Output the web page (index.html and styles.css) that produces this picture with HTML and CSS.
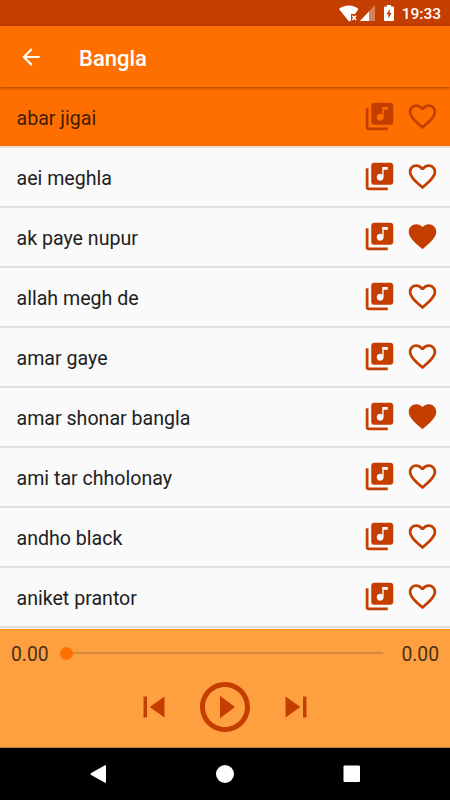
FILE: index.html
```html
<!DOCTYPE html>
<html lang="en">
<head>
    <meta charset="UTF-8">
    <meta name="viewport" content="width=device-width, initial-scale=1.0">
    <title>Bangla</title>
    <link rel="stylesheet" href="styles.css">
</head>
<body>

    <svg class="symbols">
        <symbol id="music" viewBox="0 0 24 24">
            <path d="M20 2H8c-1.1 0-2 .9-2 2v12c0 1.1.9 2 2 2h12c1.1 0 2-.9 2-2V4c0-1.1-.9-2-2-2zm-2 5h-3v5.5c0 1.38-1.12 2.5-2.5 2.5S10 13.88 10 12.5s1.12-2.5 2.5-2.5c.57 0 1.08.19 1.5.51V5h4v2zM4 6H2v14c0 1.1.9 2 2 2h14v-2H4V6z"/>
        </symbol>
        <symbol id="heart" viewBox="0 0 24 24">
            <path d="M16.5 3c-1.74 0-3.41.81-4.5 2.09C10.91 3.81 9.24 3 7.5 3 4.42 3 2 5.42 2 8.5c0 3.78 3.4 6.86 8.55 11.54L12 21.35l1.45-1.32C18.6 15.36 22 12.28 22 8.5 22 5.42 19.58 3 16.5 3zm-4.4 15.55l-.1.1-.1-.1C7.14 14.24 4 11.39 4 8.5 4 6.5 5.5 5 7.5 5c1.54 0 3.04.99 3.57 2.36h1.87C13.46 5.99 14.96 5 16.5 5c2 0 3.5 1.5 3.5 3.5 0 2.89-3.14 5.74-7.9 10.05z"/>
        </symbol>
        <symbol id="heart-full" viewBox="0 0 24 24">
            <path d="M12 21.35l-1.45-1.32C5.4 15.36 2 12.28 2 8.5 2 5.42 4.42 3 7.5 3c1.74 0 3.41.81 4.5 2.09C13.09 3.81 14.76 3 16.5 3 19.58 3 22 5.42 22 8.5c0 3.78-3.4 6.86-8.55 11.54L12 21.35z"/>
        </symbol>
    </svg>

    <div class="status-bar">
        <svg class="wifi" viewBox="0 0 20 17">
            <path d="M0 4C5-.7 14.5-.7 19.5 4L16 9H12v6.500L10 16.500z"/>
            <path class="cross" d="M13.300 10.800l3.800 4.200M17.100 10.800l-3.800 4.200"/>
        </svg>
        <svg class="signal" viewBox="0 0 15 16">
            <path class="faded" d="M15 0v16H0z"/>
            <path d="M9 6.400V16H0z"/>
        </svg>
        <svg class="battery" viewBox="0 0 10 16">
            <path fill-rule="evenodd" d="M3 0h4v1.500h2q1 0 1 1V15q0 1-1 1H1q-1 0-1-1V2.500q0-1 1-1h2zM5.700 4L2.400 9.300h2V13.500L7.700 8H5.700z"/>
        </svg>
        <span class="clock">19:33</span>
    </div>

    <div class="toolbar">
        <svg class="back" viewBox="0 0 24 24">
            <path d="M20 11H7.830l5.590-5.590L12 4l-8 8 8 8 1.410-1.410L7.830 13H20v-2z"/>
        </svg>
        <h1>Bangla</h1>
    </div>

    <ul class="songs">
        <li class="song active">
            <span>abar jigai</span>
            <svg><use href="#music"/></svg>
            <svg><use href="#heart"/></svg>
        </li>
        <li class="song">
            <span>aei meghla</span>
            <svg><use href="#music"/></svg>
            <svg><use href="#heart"/></svg>
        </li>
        <li class="song">
            <span>ak paye nupur</span>
            <svg><use href="#music"/></svg>
            <svg><use href="#heart-full"/></svg>
        </li>
        <li class="song">
            <span>allah megh de</span>
            <svg><use href="#music"/></svg>
            <svg><use href="#heart"/></svg>
        </li>
        <li class="song">
            <span>amar gaye</span>
            <svg><use href="#music"/></svg>
            <svg><use href="#heart"/></svg>
        </li>
        <li class="song">
            <span>amar shonar bangla</span>
            <svg><use href="#music"/></svg>
            <svg><use href="#heart-full"/></svg>
        </li>
        <li class="song">
            <span>ami tar chholonay</span>
            <svg><use href="#music"/></svg>
            <svg><use href="#heart"/></svg>
        </li>
        <li class="song">
            <span>andho black</span>
            <svg><use href="#music"/></svg>
            <svg><use href="#heart"/></svg>
        </li>
        <li class="song">
            <span>aniket prantor</span>
            <svg><use href="#music"/></svg>
            <svg><use href="#heart"/></svg>
        </li>
    </ul>

    <div class="player">
        <div class="progress">
            <span class="time">0.00</span>
            <div class="thumb"></div>
            <div class="track"></div>
            <span class="time">0.00</span>
        </div>
        <div class="controls">
            <svg class="skip" viewBox="0 0 24 24"><path d="M6 6h2v12H6zm3.500 6l8.500 6V6z"/></svg>
            <svg class="play" viewBox="0 0 24 24"><path d="M10 16.500l6-4.500-6-4.500v9zM12 2C6.480 2 2 6.480 2 12s4.480 10 10 10 10-4.480 10-10S17.520 2 12 2zm0 18c-4.410 0-8-3.590-8-8s3.590-8 8-8 8 3.590 8 8-3.590 8-8 8z"/></svg>
            <svg class="skip" viewBox="0 0 24 24"><path d="M6 18l8.500-6L6 6v12zM16 6v12h2V6h-2z"/></svg>
        </div>
    </div>

    <div class="nav-bar">
        <svg viewBox="0 0 18 18"><path d="M1.800 8.300L16 .300Q17 0 17 1v16q0 1-1 .700L1.800 9.700Q.800 9 1.800 8.300z"/></svg>
        <svg viewBox="0 0 18 18"><circle cx="9" cy="9" r="9"/></svg>
        <svg viewBox="0 0 18 18"><rect x=".500" y=".500" width="16.500" height="16.500" rx="1"/></svg>
    </div>

</body>
</html>
```
FILE: styles.css
```css
* {
    box-sizing: border-box;
}

body {
    font-family: Roboto, "Liberation Sans", sans-serif;
    background-color: #fafafa;
    margin: 0;
    height: 800px;
    display: flex;
    flex-direction: column;
    overflow: hidden;
}

svg {
    display: block;
    flex: none;
}

.symbols {
    display: none;
}

.status-bar {
    height: 26px;
    padding-right: 9px;
    background-color: #c43e00;
    color: #ffffff;
    fill: #ffffff;
    display: flex;
    align-items: center;
    justify-content: flex-end;
}

.wifi {
    width: 20px;
    height: 17px;
    margin-right: 1px;
}

.cross {
    stroke: #ffffff;
    stroke-width: 1.5;
}

.signal {
    width: 15px;
    height: 16px;
    margin-right: 9px;
}

.faded {
    opacity: 0.35;
}

.battery {
    width: 10px;
    height: 16px;
    margin-right: 8px;
}

.clock {
    font-size: 15.5px;
    font-weight: 500;
    line-height: 26px;
    margin-top: 2px;
}

.toolbar {
    height: 61px;
    padding-left: 18px;
    background-color: #ff6f00;
    box-shadow: 0 1px 3px rgba(0, 0, 0, 0.4);
    position: relative;
    display: flex;
    align-items: center;
}

.back {
    width: 26px;
    height: 26px;
    fill: #ffffff;
}

h1 {
    margin: 3px 0 0 35px;
    color: #ffffff;
    font-size: 22px;
    font-weight: 500;
}

.songs {
    list-style: none;
    margin: 0;
    padding: 0;
    height: 542px;
}

.song {
    height: 60px;
    padding: 0 11px 0 16.5px;
    border-bottom: 2px solid #e0e0e0;
    color: #212121;
    font-size: 19.6px;
    display: flex;
    align-items: center;
}

.song span {
    flex: 1;
    padding-top: 3px;
}

.song svg {
    width: 33px;
    height: 33px;
    margin-bottom: 1px;
    fill: #c43e00;
}

.song svg + svg {
    margin-left: 10.5px;
}

.active {
    height: 61px;
    padding-top: 1px;
    background-color: #ff6f00;
    border-bottom-color: #eeddd0;
    color: #421d00;
}

.player {
    height: 119px;
    background-color: #ffa040;
    border-top: 1px solid #f99410;
    border-bottom: 1px solid #c67c30;
}

.progress {
    height: 46px;
    margin-bottom: 1px;
    padding: 0 11px;
    display: flex;
    align-items: center;
    color: #49301a;
    font-size: 19.3px;
}

.time {
    padding-top: 2px;
}

.thumb {
    width: 13px;
    height: 13px;
    margin-left: 11px;
    border-radius: 50%;
    background-color: #ff6f00;
}

.track {
    flex: 1;
    height: 2px;
    margin-right: 18px;
    background-color: #d8883a;
}

.controls {
    display: flex;
    align-items: center;
    justify-content: center;
    gap: 20px;
    fill: #c43e00;
}

.skip {
    width: 42px;
    height: 42px;
}

.play {
    width: 60px;
    height: 60px;
}

.nav-bar {
    height: 52px;
    background-color: #000000;
    fill: #ffffff;
    display: flex;
    align-items: center;
    justify-content: center;
    gap: 109px;
}

.nav-bar svg {
    width: 18px;
    height: 18px;
}
```
